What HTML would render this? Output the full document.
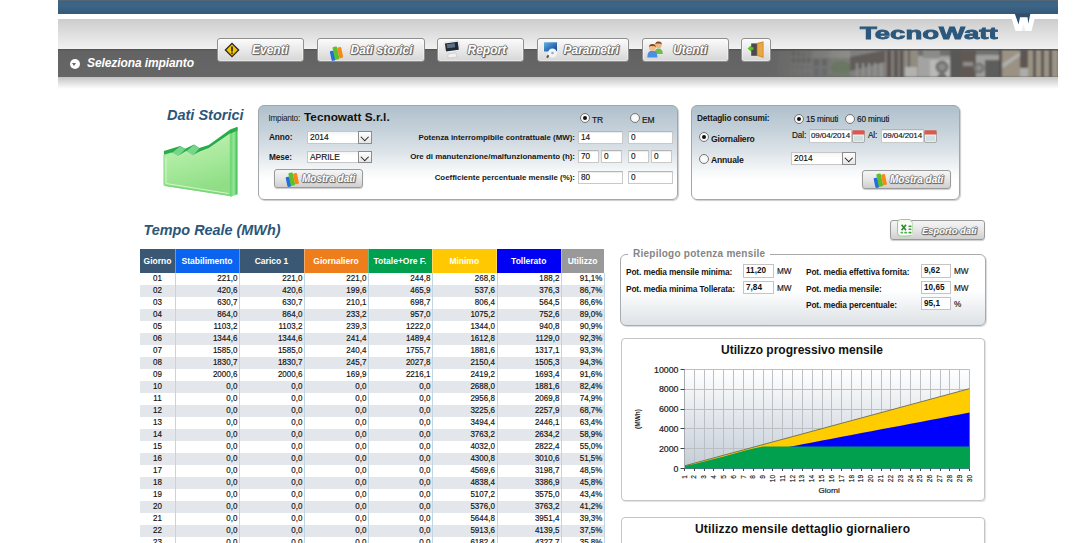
<!DOCTYPE html>
<html><head><meta charset="utf-8">
<style>
*{margin:0;padding:0;box-sizing:border-box}
html,body{width:1092px;height:543px;overflow:hidden;background:#fff;font-family:"Liberation Sans",sans-serif;color:#222}
.a{position:absolute}
/* header */
#hdr{position:absolute;left:58px;top:0;width:1000px;height:90px}
#blue{position:absolute;left:0;top:0;width:1000px;height:13.6px;background:linear-gradient(#6a6a6a 0,#3a6384 1px,#3c6586 40%,#34597a 100%)}
#grayg{position:absolute;left:0;top:19px;width:1000px;height:30px;background:linear-gradient(#cdcdcd,#f1f1f1)}
#dark{position:absolute;left:0;top:49px;width:1000px;height:28px;background:linear-gradient(#505050 0,#636363 2px,#666 100%)}
#shad{position:absolute;left:0;top:77px;width:1000px;height:12px;background:linear-gradient(#c4c4c4,#fff)}
.sel{position:absolute;left:29px;top:56px;color:#fff;font:italic bold 12px "Liberation Sans",sans-serif;letter-spacing:-0.1px;white-space:nowrap}
.circ{position:absolute;left:11.5px;top:59px;width:10px;height:10px;border-radius:50%;background:#fff}
.circ:after{content:"";position:absolute;left:2.5px;top:4px;border-left:2.5px solid transparent;border-right:2.5px solid transparent;border-top:3px solid #666}
.nb{position:absolute;top:38px;height:24px;border:1px solid #8f8f8f;border-radius:3px;background:linear-gradient(#fbfbfb,#e9e9e9 50%,#d6d6d6);box-shadow:0 0 0 1px rgba(255,255,255,.35) inset}
.nb span{position:absolute;top:4px;color:#fff;font:italic bold 12px "Liberation Sans",sans-serif;white-space:nowrap;text-shadow:1px 0 0.5px #6a6a6a,-1px 0 0.5px #7a7a7a,0 1px 0.5px #6a6a6a,0 -1px 0.5px #8a8a8a,1px 1px 1px #444}
.logo{position:absolute;left:801.5px;top:24.5px;color:#2b587c;font:bold 17px "Liberation Sans",sans-serif;line-height:17px;transform-origin:0 0;transform:scaleX(1.62);letter-spacing:0;-webkit-text-stroke:0.8px #2b587c}
/* titles */
.t1{position:absolute;color:#2c5678;font:italic bold 14.5px "Liberation Sans",sans-serif;white-space:nowrap}
/* panels */
.pnl{position:absolute;border:1px solid #a2a6aa;border-radius:6px;background:linear-gradient(#afc0cc 0,#c9d4dc 30%,#dde4e9 50%,#f6f8f9 70%,#fff 80%);box-shadow:1px 1px 1px rgba(0,0,0,.2)}
.lb{position:absolute;font:bold 8.3px "Liberation Sans",sans-serif;color:#161616;white-space:nowrap;letter-spacing:-0.12px;margin-top:0.6px}
.lr{position:absolute;font:8.2px "Liberation Sans",sans-serif;color:#141414;white-space:nowrap;-webkit-text-stroke:0.15px #141414;letter-spacing:-0.1px}
.inp{position:absolute;background:#fff;border:1px solid #c9c9c9;border-top-color:#b5b5b5;box-shadow:inset 0 1px 1px rgba(0,0,0,.08);font:8.2px "Liberation Sans",sans-serif;color:#141414;-webkit-text-stroke:0.15px #141414;padding-left:2px;line-height:11px;white-space:nowrap}
.selbox{position:absolute;background:linear-gradient(#f4f4f4,#fff 40%);border:1px solid #c7c7c7;font:8.4px "Liberation Sans",sans-serif;color:#111;padding-left:2px;white-space:nowrap;-webkit-text-stroke:0.15px #111}
.selbox i{position:absolute;right:-1px;top:-1px;bottom:-1px;width:14px;border:1px solid #8c8c8c;background:linear-gradient(#fff,#e6e6e6)}
.selbox i:after{content:"";position:absolute;left:3px;top:1.5px;width:4.5px;height:4.5px;border-right:1.7px solid #151515;border-bottom:1.7px solid #151515;transform:rotate(45deg)}
.rad{position:absolute;width:10px;height:10px;border-radius:50%;border:1px solid #777;background:radial-gradient(#fff,#eee)}
.rad.on:after{content:"";position:absolute;left:2px;top:2px;width:4px;height:4px;border-radius:50%;background:#111}
.btn{position:absolute;border:1px solid #9a9a9a;border-radius:3px;background:linear-gradient(#f5f5f5,#e6e6e6 50%,#cfcfcf);box-shadow:0 1px 1px rgba(0,0,0,.2)}
.btn span{position:absolute;color:#fff;font:italic bold 10px "Liberation Sans",sans-serif;white-space:nowrap;text-shadow:1px 0 0 #808080,-1px 0 0 #808080,0 1px 0 #707070,0 -1px 0 #909090,1px 1px 1px #444}
/* table */
.th{position:absolute;color:#fff;font:bold 8.5px "Liberation Sans",sans-serif;text-align:center;line-height:24px;white-space:nowrap}
.tr{position:absolute;left:140px;width:464px;height:12px}
.vs{position:absolute;top:273px;height:270px;width:1px;background:#c3d5e3}
.hs{position:absolute;top:249px;height:24px;width:1px;background:rgba(255,255,255,.35)}
.td{position:absolute;height:12px;line-height:12px;font:8px "Liberation Sans",sans-serif;color:#111;white-space:nowrap;-webkit-text-stroke:0.15px #111;transform:translateY(1.3px) scaleY(1.12)}
/* fieldset */
.fs{position:absolute;border:1px solid #a7abae;border-radius:6px;background:linear-gradient(#fff 0,#fff 50%,#dde2e6 100%);box-shadow:1px 1px 1px rgba(0,0,0,.15)}
.vb{position:absolute;background:#fff;border:1px solid #c4c4c4;font:bold 8.2px "Liberation Sans",sans-serif;color:#111;padding-left:2px;line-height:12px}
/* chart */
.cp{position:absolute;border:1px solid #c5c5c5;border-radius:4px;background:#fff;box-shadow:1px 1px 1px rgba(0,0,0,.12)}
.ct{position:absolute;font:bold 12px "Liberation Sans",sans-serif;color:#111;white-space:nowrap}
.yl{position:absolute;left:640px;width:38.5px;text-align:right;font:8.8px "Liberation Sans",sans-serif;color:#1a1a1a;line-height:12px;-webkit-text-stroke:0.2px #1a1a1a}
.xl{position:absolute;top:479px;width:20px;height:12px;text-align:right;font:6.5px "Liberation Sans",sans-serif;color:#222;line-height:12px;transform:rotate(-90deg) scaleY(1.2);transform-origin:50% 50%;-webkit-text-stroke:0.15px #222}
</style></head><body>
<div id="hdr">
  <div id="blue"></div>
  <div id="grayg"></div>
  <div id="dark"></div>
  <div id="shad"></div>
  <!-- photo strip -->
  <svg class="a" style="left:700px;top:49px" width="300" height="28">
    <defs>
      <linearGradient id="fade" x1="0" y1="0" x2="1" y2="0"><stop offset="0" stop-color="#fff" stop-opacity="0"/><stop offset="0.12" stop-color="#fff" stop-opacity="0.35"/><stop offset="0.3" stop-color="#fff" stop-opacity="0.85"/><stop offset="0.42" stop-color="#fff" stop-opacity="1"/></linearGradient>
      <mask id="fm"><rect width="300" height="28" fill="url(#fade)"/></mask>
      <filter id="bl" x="0" y="0" width="1" height="1"><feGaussianBlur stdDeviation="0.85"/><feColorMatrix type="saturate" values="0.65"/><feComponentTransfer><feFuncR type="linear" slope="0.9" intercept="0.03"/><feFuncG type="linear" slope="0.9" intercept="0.03"/><feFuncB type="linear" slope="0.9" intercept="0.03"/></feComponentTransfer></filter>
    </defs>
    <g mask="url(#fm)" filter="url(#bl)">
      <rect x="0" y="0" width="300" height="28" fill="#6c6c6a"/>
      <rect x="20" y="1" width="34" height="27" fill="#7c7c7a"/>
      <rect x="34" y="2.0" width="3" height="15.0" fill="#585856"/>
      <rect x="39" y="3.5" width="3" height="13.5" fill="#585856"/>
      <rect x="44" y="5.0" width="3" height="12.0" fill="#585856"/>
      <rect x="49" y="6.5" width="3" height="10.5" fill="#585856"/>
      <rect x="20" y="14" width="34" height="14" fill="#7e7e7c"/>
      <rect x="24" y="14" width="1" height="14" fill="#6a6a68"/>
      <rect x="29" y="14" width="1" height="14" fill="#6a6a68"/>
      <rect x="34" y="14" width="1" height="14" fill="#6a6a68"/>
      <rect x="39" y="14" width="1" height="14" fill="#6a6a68"/>
      <rect x="44" y="14" width="1" height="14" fill="#6a6a68"/>
      <rect x="49" y="14" width="1" height="14" fill="#6a6a68"/>
      <rect x="32" y="7" width="22" height="1.5" fill="#8a8a88"/><rect x="32" y="14" width="22" height="1.5" fill="#8a8a88"/><rect x="32" y="21" width="22" height="1.5" fill="#8a8a88"/><rect x="54" y="1" width="18" height="27" fill="#7a7a76"/>
      <rect x="54" y="1" width="18" height="8" fill="#8e8d88"/>
      <rect x="56" y="10" width="5" height="7" fill="#5a5e64"/>
      <rect x="64" y="10" width="5" height="7" fill="#5a5e64"/>
      <rect x="56" y="19" width="5" height="8" fill="#646870"/>
      <rect x="64" y="19" width="5" height="8" fill="#646870"/>
      <rect x="72" y="1" width="20" height="27" fill="#7f7f76"/>
      <rect x="72" y="1" width="20" height="8" fill="#94948c"/>
      <ellipse cx="83" cy="19" rx="10" ry="7" fill="#5f7d48"/>
      <rect x="72" y="24" width="20" height="4" fill="#6f7d5c"/>
      <rect x="92" y="1" width="35" height="27" fill="#828280"/>
      <path d="M92,8 L127,1 L127,13 L92,22 Z" fill="#5b534d"/>
      <rect x="98" y="14" width="2" height="14" fill="#969692"/>
      <rect x="104" y="14" width="2" height="14" fill="#969692"/>
      <rect x="110" y="14" width="2" height="14" fill="#969692"/>
      <rect x="116" y="14" width="2" height="14" fill="#969692"/>
      <rect x="122" y="14" width="2" height="14" fill="#969692"/>
      <rect x="127" y="1" width="20" height="27" fill="#7f7a72"/>
      <rect x="129" y="1" width="4" height="27" fill="#54473f"/>
      <rect x="136" y="1" width="4" height="27" fill="#5c4c44"/>
      <rect x="142" y="1" width="3" height="27" fill="#50443e"/>
      <rect x="147" y="1" width="13" height="27" fill="#958a74"/>
      <rect x="150" y="1" width="2" height="20" fill="#555"/>
      <rect x="147" y="18" width="12" height="10" fill="#b5b5b2"/>
      <rect x="160" y="7" width="32" height="21" fill="#a6a6a4"/>
      <rect x="165" y="1" width="17" height="8" fill="#8a8a88"/>
      <rect x="172" y="11" width="20" height="17" fill="#bdbdbb"/>
      <circle cx="184" cy="18" r="6.5" fill="#6a6a68"/><circle cx="184" cy="18" r="3.5" fill="#8c8c8a"/>
      <circle cx="184" cy="29" r="5" fill="#6a6a68"/>
      <rect x="192" y="1" width="11" height="27" fill="#4f4f4e"/>
      <rect x="203" y="1" width="15" height="27" fill="#5e4d45"/>
      <rect x="205" y="13" width="10" height="4" fill="#8c8c8a"/>
      <rect x="218" y="6" width="23" height="22" fill="#a2a2a0"/>
      <rect x="227" y="11" width="14" height="17" fill="#545453"/>
      <circle cx="221" cy="19" r="5.5" fill="#707070"/><circle cx="221" cy="19" r="2.8" fill="#909090"/>
      <rect x="241" y="1" width="3" height="27" fill="#4d4742"/>
      <rect x="244" y="1" width="18" height="27" fill="#9f9276"/>
      <path d="M244,15 L262,3 L262,7 L245,19 Z" fill="#b4b4b2"/>
      <rect x="262" y="1" width="8" height="27" fill="#594a42"/>
      <rect x="262" y="19" width="8" height="9" fill="#b0b0ae"/>
      <rect x="270" y="1" width="30" height="27" fill="#a09478"/>
      <rect x="275" y="1" width="3" height="27" fill="#544842"/>
      <rect x="283" y="1" width="3" height="27" fill="#544842"/>
      <rect x="291" y="1" width="3" height="27" fill="#544842"/>
    </g>
    <rect x="0" y="0" width="300" height="1.5" fill="#4a4a4a" opacity="0.6"/>
  </svg>
  <div class="circ"></div>
  <div class="sel">Seleziona impianto</div>
  <div class="logo">TecnoWatt</div>
  <!-- W mark -->
  <svg class="a" style="left:950px;top:12px" width="30" height="22">
    <path d="M3.8,6.8 L7.5,19 L23.5,19 L26.6,6.8 Z" fill="#fff"/>
    <path d="M6.7,1.6 L10.6,12.5 L12,5.3 L19.5,5.3 L20.3,11.8 L22.4,1.6 Z" fill="#2d4f6c"/><path d="M13.5,19 L15.5,12.5 L17.5,19 Z" fill="#e2e2e2" opacity="0.6"/>
  </svg>
  <!-- nav buttons -->
  <div class="nb" style="left:159px;width:87px">
    <svg class="a" style="left:6px;top:3px" width="16" height="16"><path d="M8,0.5 L15.5,8 L8,15.5 L0.5,8 Z" fill="#222"/><path d="M8,2.3 L13.7,8 L8,13.7 L2.3,8 Z" fill="#f5c400"/><rect x="7.2" y="4.5" width="1.6" height="5" fill="#222"/><rect x="7.2" y="10.5" width="1.6" height="1.6" fill="#222"/></svg>
    <span style="left:34px">Eventi</span>
  </div>
  <div class="nb" style="left:259px;width:108px">
    <svg class="a" style="left:8px;top:3px" width="20" height="20"><g transform="rotate(-12 10 10)"><rect x="4" y="8" width="4" height="10" rx="1" fill="#1f6fe0"/><rect x="7.5" y="4.5" width="4.5" height="13" rx="1" fill="#5cc02a"/><rect x="12" y="6" width="4" height="11" rx="1" fill="#f58a1a"/></g></svg>
    <span style="left:32.5px">Dati storici</span>
  </div>
  <div class="nb" style="left:379px;width:87px">
    <svg class="a" style="left:0px;top:0px" width="30" height="22"><g transform="rotate(-8 14 7)"><rect x="6" y="2.5" width="15.5" height="10.5" rx="1.5" fill="#fafafa" stroke="#d8d8d8" stroke-width="0.6"/><rect x="7.3" y="3.6" width="13" height="8" fill="#1f2a36"/><rect x="9" y="4.6" width="8" height="4" fill="#6d8299" opacity="0.8"/></g><path d="M10,15 L18,14 L19,18 L10,19 Z" fill="#f2f2f2" stroke="#bbb" stroke-width="0.5"/></svg>
    <span style="left:29.5px">Report</span>
  </div>
  <div class="nb" style="left:479px;width:92px">
    <svg class="a" style="left:0px;top:0px" width="24" height="22"><rect x="5.2" y="3" width="14" height="10" fill="#f5efe8"/><defs><linearGradient id="pgr" x1="0" y1="0" x2="1" y2="1"><stop offset="0" stop-color="#5fb4e8"/><stop offset="1" stop-color="#0a3c8c"/></linearGradient></defs><rect x="6" y="3.3" width="13" height="9.2" fill="url(#pgr)"/><circle cx="14.5" cy="14" r="4.5" fill="#f4f4f4"/><circle cx="14.5" cy="14" r="1.3" fill="#8fb0d8"/><rect x="9" y="16" width="2" height="3" fill="#555" transform="rotate(30 10 17)"/></svg>
    <span style="left:25.5px">Parametri</span>
  </div>
  <div class="nb" style="left:584px;width:87px">
    <svg class="a" style="left:0px;top:0px" width="24" height="22"><path d="M11.5,15 Q11.5,9.5 15.5,9.5 Q19.8,9.5 19.8,15 Z" fill="#6cc04a"/><circle cx="15.5" cy="6" r="3.2" fill="#e8b88a"/><path d="M12.2,5.5 Q12.5,2.2 15.5,2.4 Q18.8,2.3 18.8,5.6 Q17,4 15.5,4.6 Q13.5,4 12.2,5.5 Z" fill="#8a4a1a"/><path d="M4.2,18.5 Q4.2,11.5 9.4,11.5 Q14.5,11.5 14.5,18.5 Z" fill="#4a8fe0"/><circle cx="9.4" cy="8.7" r="3.4" fill="#f0c090"/><path d="M6,8.2 Q6.2,4.8 9.4,5 Q12.8,4.8 12.8,8.4 Q11,6.6 9.4,7.3 Q7.4,6.6 6,8.2 Z" fill="#8a4a1a"/></svg>
    <span style="left:30px">Utenti</span>
  </div>
  <div class="nb" style="left:683px;width:30px">
    <svg class="a" style="left:0px;top:0px" width="28" height="22"><rect x="9.2" y="4.4" width="6" height="12.4" fill="#4a4a4c"/><path d="M14.8,4 L21.6,2.3 L21.6,19 L14.8,16.8 Z" fill="#d9902e"/><path d="M16,5 L20.5,3.8 L20.5,17.2 L16,16 Z" fill="#e8a848"/><path d="M5.5,9.5 L9,6.6 L9,8.3 L11.5,8.3 L11.5,10.7 L9,10.7 L9,12.4 Z" fill="#62c02a"/></svg>
  </div>
</div>

<!-- Dati storici title + icon -->
<div class="t1" style="left:167px;top:107px">Dati Storici</div>
<svg class="a" style="left:160px;top:124px" width="82" height="78">
  <defs>
    <linearGradient id="gf" x1="0" y1="0" x2="0.3" y2="1"><stop offset="0" stop-color="#c6f3b8"/><stop offset="0.55" stop-color="#a8e99c"/><stop offset="1" stop-color="#8fde86"/></linearGradient>
    <linearGradient id="gs" x1="0" y1="0" x2="1" y2="0"><stop offset="0" stop-color="#5fd36a"/><stop offset="0.5" stop-color="#9be69a"/><stop offset="1" stop-color="#35b84e"/></linearGradient>
  </defs>
  <path d="M3.9,31.1 L12,28.9 L17.9,32.6 L26,27.5 L32.6,31.9 L39.2,28.2 L48.8,24.5 L70.2,9.8 L70.2,71.6 L3.9,61.3 Z" fill="url(#gf)" stroke="#7fd97a" stroke-width="0.8"/>
  <path d="M6,34 L6,59.5 L68.5,69.5" fill="none" stroke="#d8f7d0" stroke-width="0.9"/>
  <path d="M5.5,60.8 L70,70.8 L70,72 L5,62 Z" fill="#7ad67a"/>
  <path d="M70.2,6.1 L77.5,3.2 L77.5,70.2 L70.2,73.1 Z" fill="url(#gs)"/>
  <path d="M3.9,27 L20.1,22 L25.2,24.8 L34.1,20.4 L39.2,24 L48.8,21 L70.2,5.6 L77.5,2.8 L77.5,6.5 L70.2,9.8 L48.8,24.5 L39.2,28.2 L32.6,31.9 L26,27.5 L17.9,32.6 L12,28.9 L3.9,31.6 Z" fill="#27ad48"/>
  <path d="M12,28.9 L20.1,22.3 L25.2,25.2 L17.9,32.6 Z" fill="#78d68a"/>
  <path d="M26,27.5 L34.1,20.8 L39.2,24.5 L32.6,31.9 Z" fill="#78d68a"/>
  <path d="M3.9,31.1 L12,28.9 L17.9,32.6 L26,27.5 L32.6,31.9 L39.2,28.2 L48.8,24.5 L70.2,9.8" fill="none" stroke="#e6fbd9" stroke-width="0.7"/>
</svg>

<!-- panel 1 -->
<div class="pnl" style="left:258px;top:105px;width:420px;height:95px"></div>
<div class="lb" style="left:268.5px;top:113.5px;font-weight:normal;font-size:8.2px;letter-spacing:-0.25px">Impianto:</div>
<div class="a" style="left:304px;top:110px;font:bold 11.8px 'Liberation Sans',sans-serif;color:#111;white-space:nowrap">Tecnowatt S.r.l.</div>
<div class="lb" style="left:269px;top:131.8px">Anno:</div>
<div class="lb" style="left:269px;top:151.8px">Mese:</div>
<div class="selbox" style="left:307px;top:131px;width:65px;height:13px;line-height:11px">2014<i></i></div>
<div class="selbox" style="left:307px;top:151px;width:65px;height:12px;line-height:10px">APRILE<i></i></div>
<div class="btn" style="left:274px;top:169px;width:89px;height:19px">
  <svg class="a" style="left:7px;top:0px" width="20" height="18"><g transform="rotate(-12 10 9)"><rect x="4" y="6" width="4" height="10" rx="1" fill="#1f6fe0"/><rect x="7.5" y="2.5" width="4.5" height="13" rx="1" fill="#5cc02a"/><rect x="12" y="4" width="4" height="11" rx="1" fill="#f58a1a"/></g></svg>
  <span style="left:27px;top:3px">Mostra dati</span>
</div>
<div class="rad on" style="left:580px;top:113px"></div>
<div class="lr" style="left:592px;top:115px;font-size:8.5px">TR</div>
<div class="rad" style="left:630px;top:113px"></div>
<div class="lr" style="left:642px;top:115px;font-size:8.5px">EM</div>
<div class="lb" style="right:517px;font-size:7.9px;letter-spacing:0;top:132px">Potenza interrompibile contrattuale (MW):</div>
<div class="lb" style="right:517px;font-size:7.9px;letter-spacing:0;top:151px">Ore di manutenzione/malfunzionamento (h):</div>
<div class="lb" style="right:517px;font-size:7.9px;letter-spacing:0;top:172px">Coefficiente percentuale mensile (%):</div>
<div class="inp" style="left:578px;top:131px;width:45px;height:13px">14</div>
<div class="inp" style="left:628px;top:131px;width:45px;height:13px">0</div>
<div class="inp" style="left:578px;top:150px;width:21px;height:13px">70</div>
<div class="inp" style="left:601px;top:150px;width:21px;height:13px">0</div>
<div class="inp" style="left:628px;top:150px;width:21px;height:13px">0</div>
<div class="inp" style="left:651px;top:150px;width:21px;height:13px">0</div>
<div class="inp" style="left:578px;top:171px;width:45px;height:13px">80</div>
<div class="inp" style="left:628px;top:171px;width:45px;height:13px">0</div>

<!-- panel 2 -->
<div class="pnl" style="left:691px;top:105px;width:269px;height:95px"></div>
<div class="lb" style="left:697px;top:112px">Dettaglio consumi:</div>
<div class="rad on" style="left:794px;top:114px"></div>
<div class="lr" style="left:806px;top:115px">15 minuti</div>
<div class="rad" style="left:845px;top:114px"></div>
<div class="lr" style="left:857px;top:115px">60 minuti</div>
<div class="rad on" style="left:699px;top:132.2px"></div>
<div class="lb" style="left:711px;top:133.1px;font-size:8.6px;letter-spacing:-0.2px">Giornaliero</div>
<div class="rad" style="left:699px;top:154px"></div>
<div class="lb" style="left:711px;top:154px;font-size:8.6px;letter-spacing:-0.2px">Annuale</div>
<div class="lr" style="left:792px;top:131px">Dal:</div>
<div class="inp" style="left:809px;top:129px;width:43px;height:14px;line-height:12px;padding-left:1px;font-size:8px;letter-spacing:-0.1px">09/04/2014</div>
<svg class="a" style="left:852px;top:130px" width="13" height="13"><rect x="0.5" y="0.5" width="12" height="12" rx="1.5" fill="#e8eef0" stroke="#aaa"/><rect x="0.5" y="0.5" width="12" height="4" fill="#e2554a"/><rect x="2" y="6" width="9" height="5" fill="#cfe0e2"/></svg>
<div class="lr" style="left:868px;top:131px">Al:</div>
<div class="inp" style="left:881px;top:129px;width:43px;height:14px;line-height:12px;padding-left:1px;font-size:8px;letter-spacing:-0.1px">09/04/2014</div>
<svg class="a" style="left:924px;top:130px" width="13" height="13"><rect x="0.5" y="0.5" width="12" height="12" rx="1.5" fill="#e8eef0" stroke="#aaa"/><rect x="0.5" y="0.5" width="12" height="4" fill="#e2554a"/><rect x="2" y="6" width="9" height="5" fill="#cfe0e2"/></svg>
<div class="selbox" style="left:791px;top:152px;width:65px;height:13px;line-height:11px">2014<i></i></div>
<div class="btn" style="left:862px;top:170px;width:89px;height:19px">
  <svg class="a" style="left:7px;top:0px" width="20" height="18"><g transform="rotate(-12 10 9)"><rect x="4" y="6" width="4" height="10" rx="1" fill="#1f6fe0"/><rect x="7.5" y="2.5" width="4.5" height="13" rx="1" fill="#5cc02a"/><rect x="12" y="4" width="4" height="11" rx="1" fill="#f58a1a"/></g></svg>
  <span style="left:27px;top:3px">Mostra dati</span>
</div>

<!-- Tempo reale -->
<div class="t1" style="left:143.5px;top:222px;font-size:14.4px">Tempo Reale (MWh)</div>
<div class="th" style="left:140px;top:249px;width:35px;height:24px;background:#3a5874">Giorno</div>
<div class="th" style="left:175px;top:249px;width:64px;height:24px;background:#0a64f0">Stabilimento</div>
<div class="th" style="left:239px;top:249px;width:65px;height:24px;background:#3a5874">Carico 1</div>
<div class="th" style="left:304px;top:249px;width:64px;height:24px;background:#ee7d1c">Giornaliero</div>
<div class="th" style="left:368px;top:249px;width:64px;height:24px;background:#00a04e">Totale+Ore F.</div>
<div class="th" style="left:432px;top:249px;width:64.5px;height:24px;background:#ffc800">Minimo</div>
<div class="th" style="left:496.5px;top:249px;width:64.5px;height:24px;background:#0000f5">Tollerato</div>
<div class="th" style="left:561px;top:249px;width:43px;height:24px;background:#999999">Utilizzo</div>
<div class="tr" style="top:273px;background:#fff"></div>
<div class="tr" style="top:285px;background:#e3e7eb"></div>
<div class="tr" style="top:297px;background:#fff"></div>
<div class="tr" style="top:309px;background:#e3e7eb"></div>
<div class="tr" style="top:321px;background:#fff"></div>
<div class="tr" style="top:333px;background:#e3e7eb"></div>
<div class="tr" style="top:345px;background:#fff"></div>
<div class="tr" style="top:357px;background:#e3e7eb"></div>
<div class="tr" style="top:369px;background:#fff"></div>
<div class="tr" style="top:381px;background:#e3e7eb"></div>
<div class="tr" style="top:393px;background:#fff"></div>
<div class="tr" style="top:405px;background:#e3e7eb"></div>
<div class="tr" style="top:417px;background:#fff"></div>
<div class="tr" style="top:429px;background:#e3e7eb"></div>
<div class="tr" style="top:441px;background:#fff"></div>
<div class="tr" style="top:453px;background:#e3e7eb"></div>
<div class="tr" style="top:465px;background:#fff"></div>
<div class="tr" style="top:477px;background:#e3e7eb"></div>
<div class="tr" style="top:489px;background:#fff"></div>
<div class="tr" style="top:501px;background:#e3e7eb"></div>
<div class="tr" style="top:513px;background:#fff"></div>
<div class="tr" style="top:525px;background:#e3e7eb"></div>
<div class="tr" style="top:537px;background:#fff"></div>
<div class="vs" style="left:175px"></div>
<div class="vs" style="left:239px"></div>
<div class="vs" style="left:304px"></div>
<div class="vs" style="left:368px"></div>
<div class="vs" style="left:432px"></div>
<div class="vs" style="left:496.5px"></div>
<div class="vs" style="left:561px"></div>
<div class="vs" style="left:604px"></div>
<div class="hs" style="left:174.5px"></div>
<div class="hs" style="left:238.5px"></div>
<div class="hs" style="left:303.5px"></div>
<div class="hs" style="left:367.5px"></div>
<div class="hs" style="left:431.5px"></div>
<div class="hs" style="left:496.0px"></div>
<div class="hs" style="left:560.5px"></div>
<div class="td" style="left:140px;top:273px;width:35px;text-align:center">01</div>
<div class="td" style="left:175px;top:273px;width:62.4px;text-align:right">221,0</div>
<div class="td" style="left:239px;top:273px;width:63.4px;text-align:right">221,0</div>
<div class="td" style="left:304px;top:273px;width:62.4px;text-align:right">221,0</div>
<div class="td" style="left:368px;top:273px;width:62.4px;text-align:right">244,8</div>
<div class="td" style="left:432px;top:273px;width:62.9px;text-align:right">268,8</div>
<div class="td" style="left:496.5px;top:273px;width:62.9px;text-align:right">188,2</div>
<div class="td" style="left:561px;top:273px;width:41.4px;text-align:right">91,1%</div>
<div class="td" style="left:140px;top:285px;width:35px;text-align:center">02</div>
<div class="td" style="left:175px;top:285px;width:62.4px;text-align:right">420,6</div>
<div class="td" style="left:239px;top:285px;width:63.4px;text-align:right">420,6</div>
<div class="td" style="left:304px;top:285px;width:62.4px;text-align:right">199,6</div>
<div class="td" style="left:368px;top:285px;width:62.4px;text-align:right">465,9</div>
<div class="td" style="left:432px;top:285px;width:62.9px;text-align:right">537,6</div>
<div class="td" style="left:496.5px;top:285px;width:62.9px;text-align:right">376,3</div>
<div class="td" style="left:561px;top:285px;width:41.4px;text-align:right">86,7%</div>
<div class="td" style="left:140px;top:297px;width:35px;text-align:center">03</div>
<div class="td" style="left:175px;top:297px;width:62.4px;text-align:right">630,7</div>
<div class="td" style="left:239px;top:297px;width:63.4px;text-align:right">630,7</div>
<div class="td" style="left:304px;top:297px;width:62.4px;text-align:right">210,1</div>
<div class="td" style="left:368px;top:297px;width:62.4px;text-align:right">698,7</div>
<div class="td" style="left:432px;top:297px;width:62.9px;text-align:right">806,4</div>
<div class="td" style="left:496.5px;top:297px;width:62.9px;text-align:right">564,5</div>
<div class="td" style="left:561px;top:297px;width:41.4px;text-align:right">86,6%</div>
<div class="td" style="left:140px;top:309px;width:35px;text-align:center">04</div>
<div class="td" style="left:175px;top:309px;width:62.4px;text-align:right">864,0</div>
<div class="td" style="left:239px;top:309px;width:63.4px;text-align:right">864,0</div>
<div class="td" style="left:304px;top:309px;width:62.4px;text-align:right">233,2</div>
<div class="td" style="left:368px;top:309px;width:62.4px;text-align:right">957,0</div>
<div class="td" style="left:432px;top:309px;width:62.9px;text-align:right">1075,2</div>
<div class="td" style="left:496.5px;top:309px;width:62.9px;text-align:right">752,6</div>
<div class="td" style="left:561px;top:309px;width:41.4px;text-align:right">89,0%</div>
<div class="td" style="left:140px;top:321px;width:35px;text-align:center">05</div>
<div class="td" style="left:175px;top:321px;width:62.4px;text-align:right">1103,2</div>
<div class="td" style="left:239px;top:321px;width:63.4px;text-align:right">1103,2</div>
<div class="td" style="left:304px;top:321px;width:62.4px;text-align:right">239,3</div>
<div class="td" style="left:368px;top:321px;width:62.4px;text-align:right">1222,0</div>
<div class="td" style="left:432px;top:321px;width:62.9px;text-align:right">1344,0</div>
<div class="td" style="left:496.5px;top:321px;width:62.9px;text-align:right">940,8</div>
<div class="td" style="left:561px;top:321px;width:41.4px;text-align:right">90,9%</div>
<div class="td" style="left:140px;top:333px;width:35px;text-align:center">06</div>
<div class="td" style="left:175px;top:333px;width:62.4px;text-align:right">1344,6</div>
<div class="td" style="left:239px;top:333px;width:63.4px;text-align:right">1344,6</div>
<div class="td" style="left:304px;top:333px;width:62.4px;text-align:right">241,4</div>
<div class="td" style="left:368px;top:333px;width:62.4px;text-align:right">1489,4</div>
<div class="td" style="left:432px;top:333px;width:62.9px;text-align:right">1612,8</div>
<div class="td" style="left:496.5px;top:333px;width:62.9px;text-align:right">1129,0</div>
<div class="td" style="left:561px;top:333px;width:41.4px;text-align:right">92,3%</div>
<div class="td" style="left:140px;top:345px;width:35px;text-align:center">07</div>
<div class="td" style="left:175px;top:345px;width:62.4px;text-align:right">1585,0</div>
<div class="td" style="left:239px;top:345px;width:63.4px;text-align:right">1585,0</div>
<div class="td" style="left:304px;top:345px;width:62.4px;text-align:right">240,4</div>
<div class="td" style="left:368px;top:345px;width:62.4px;text-align:right">1755,7</div>
<div class="td" style="left:432px;top:345px;width:62.9px;text-align:right">1881,6</div>
<div class="td" style="left:496.5px;top:345px;width:62.9px;text-align:right">1317,1</div>
<div class="td" style="left:561px;top:345px;width:41.4px;text-align:right">93,3%</div>
<div class="td" style="left:140px;top:357px;width:35px;text-align:center">08</div>
<div class="td" style="left:175px;top:357px;width:62.4px;text-align:right">1830,7</div>
<div class="td" style="left:239px;top:357px;width:63.4px;text-align:right">1830,7</div>
<div class="td" style="left:304px;top:357px;width:62.4px;text-align:right">245,7</div>
<div class="td" style="left:368px;top:357px;width:62.4px;text-align:right">2027,8</div>
<div class="td" style="left:432px;top:357px;width:62.9px;text-align:right">2150,4</div>
<div class="td" style="left:496.5px;top:357px;width:62.9px;text-align:right">1505,3</div>
<div class="td" style="left:561px;top:357px;width:41.4px;text-align:right">94,3%</div>
<div class="td" style="left:140px;top:369px;width:35px;text-align:center">09</div>
<div class="td" style="left:175px;top:369px;width:62.4px;text-align:right">2000,6</div>
<div class="td" style="left:239px;top:369px;width:63.4px;text-align:right">2000,6</div>
<div class="td" style="left:304px;top:369px;width:62.4px;text-align:right">169,9</div>
<div class="td" style="left:368px;top:369px;width:62.4px;text-align:right">2216,1</div>
<div class="td" style="left:432px;top:369px;width:62.9px;text-align:right">2419,2</div>
<div class="td" style="left:496.5px;top:369px;width:62.9px;text-align:right">1693,4</div>
<div class="td" style="left:561px;top:369px;width:41.4px;text-align:right">91,6%</div>
<div class="td" style="left:140px;top:381px;width:35px;text-align:center">10</div>
<div class="td" style="left:175px;top:381px;width:62.4px;text-align:right">0,0</div>
<div class="td" style="left:239px;top:381px;width:63.4px;text-align:right">0,0</div>
<div class="td" style="left:304px;top:381px;width:62.4px;text-align:right">0,0</div>
<div class="td" style="left:368px;top:381px;width:62.4px;text-align:right">0,0</div>
<div class="td" style="left:432px;top:381px;width:62.9px;text-align:right">2688,0</div>
<div class="td" style="left:496.5px;top:381px;width:62.9px;text-align:right">1881,6</div>
<div class="td" style="left:561px;top:381px;width:41.4px;text-align:right">82,4%</div>
<div class="td" style="left:140px;top:393px;width:35px;text-align:center">11</div>
<div class="td" style="left:175px;top:393px;width:62.4px;text-align:right">0,0</div>
<div class="td" style="left:239px;top:393px;width:63.4px;text-align:right">0,0</div>
<div class="td" style="left:304px;top:393px;width:62.4px;text-align:right">0,0</div>
<div class="td" style="left:368px;top:393px;width:62.4px;text-align:right">0,0</div>
<div class="td" style="left:432px;top:393px;width:62.9px;text-align:right">2956,8</div>
<div class="td" style="left:496.5px;top:393px;width:62.9px;text-align:right">2069,8</div>
<div class="td" style="left:561px;top:393px;width:41.4px;text-align:right">74,9%</div>
<div class="td" style="left:140px;top:405px;width:35px;text-align:center">12</div>
<div class="td" style="left:175px;top:405px;width:62.4px;text-align:right">0,0</div>
<div class="td" style="left:239px;top:405px;width:63.4px;text-align:right">0,0</div>
<div class="td" style="left:304px;top:405px;width:62.4px;text-align:right">0,0</div>
<div class="td" style="left:368px;top:405px;width:62.4px;text-align:right">0,0</div>
<div class="td" style="left:432px;top:405px;width:62.9px;text-align:right">3225,6</div>
<div class="td" style="left:496.5px;top:405px;width:62.9px;text-align:right">2257,9</div>
<div class="td" style="left:561px;top:405px;width:41.4px;text-align:right">68,7%</div>
<div class="td" style="left:140px;top:417px;width:35px;text-align:center">13</div>
<div class="td" style="left:175px;top:417px;width:62.4px;text-align:right">0,0</div>
<div class="td" style="left:239px;top:417px;width:63.4px;text-align:right">0,0</div>
<div class="td" style="left:304px;top:417px;width:62.4px;text-align:right">0,0</div>
<div class="td" style="left:368px;top:417px;width:62.4px;text-align:right">0,0</div>
<div class="td" style="left:432px;top:417px;width:62.9px;text-align:right">3494,4</div>
<div class="td" style="left:496.5px;top:417px;width:62.9px;text-align:right">2446,1</div>
<div class="td" style="left:561px;top:417px;width:41.4px;text-align:right">63,4%</div>
<div class="td" style="left:140px;top:429px;width:35px;text-align:center">14</div>
<div class="td" style="left:175px;top:429px;width:62.4px;text-align:right">0,0</div>
<div class="td" style="left:239px;top:429px;width:63.4px;text-align:right">0,0</div>
<div class="td" style="left:304px;top:429px;width:62.4px;text-align:right">0,0</div>
<div class="td" style="left:368px;top:429px;width:62.4px;text-align:right">0,0</div>
<div class="td" style="left:432px;top:429px;width:62.9px;text-align:right">3763,2</div>
<div class="td" style="left:496.5px;top:429px;width:62.9px;text-align:right">2634,2</div>
<div class="td" style="left:561px;top:429px;width:41.4px;text-align:right">58,9%</div>
<div class="td" style="left:140px;top:441px;width:35px;text-align:center">15</div>
<div class="td" style="left:175px;top:441px;width:62.4px;text-align:right">0,0</div>
<div class="td" style="left:239px;top:441px;width:63.4px;text-align:right">0,0</div>
<div class="td" style="left:304px;top:441px;width:62.4px;text-align:right">0,0</div>
<div class="td" style="left:368px;top:441px;width:62.4px;text-align:right">0,0</div>
<div class="td" style="left:432px;top:441px;width:62.9px;text-align:right">4032,0</div>
<div class="td" style="left:496.5px;top:441px;width:62.9px;text-align:right">2822,4</div>
<div class="td" style="left:561px;top:441px;width:41.4px;text-align:right">55,0%</div>
<div class="td" style="left:140px;top:453px;width:35px;text-align:center">16</div>
<div class="td" style="left:175px;top:453px;width:62.4px;text-align:right">0,0</div>
<div class="td" style="left:239px;top:453px;width:63.4px;text-align:right">0,0</div>
<div class="td" style="left:304px;top:453px;width:62.4px;text-align:right">0,0</div>
<div class="td" style="left:368px;top:453px;width:62.4px;text-align:right">0,0</div>
<div class="td" style="left:432px;top:453px;width:62.9px;text-align:right">4300,8</div>
<div class="td" style="left:496.5px;top:453px;width:62.9px;text-align:right">3010,6</div>
<div class="td" style="left:561px;top:453px;width:41.4px;text-align:right">51,5%</div>
<div class="td" style="left:140px;top:465px;width:35px;text-align:center">17</div>
<div class="td" style="left:175px;top:465px;width:62.4px;text-align:right">0,0</div>
<div class="td" style="left:239px;top:465px;width:63.4px;text-align:right">0,0</div>
<div class="td" style="left:304px;top:465px;width:62.4px;text-align:right">0,0</div>
<div class="td" style="left:368px;top:465px;width:62.4px;text-align:right">0,0</div>
<div class="td" style="left:432px;top:465px;width:62.9px;text-align:right">4569,6</div>
<div class="td" style="left:496.5px;top:465px;width:62.9px;text-align:right">3198,7</div>
<div class="td" style="left:561px;top:465px;width:41.4px;text-align:right">48,5%</div>
<div class="td" style="left:140px;top:477px;width:35px;text-align:center">18</div>
<div class="td" style="left:175px;top:477px;width:62.4px;text-align:right">0,0</div>
<div class="td" style="left:239px;top:477px;width:63.4px;text-align:right">0,0</div>
<div class="td" style="left:304px;top:477px;width:62.4px;text-align:right">0,0</div>
<div class="td" style="left:368px;top:477px;width:62.4px;text-align:right">0,0</div>
<div class="td" style="left:432px;top:477px;width:62.9px;text-align:right">4838,4</div>
<div class="td" style="left:496.5px;top:477px;width:62.9px;text-align:right">3386,9</div>
<div class="td" style="left:561px;top:477px;width:41.4px;text-align:right">45,8%</div>
<div class="td" style="left:140px;top:489px;width:35px;text-align:center">19</div>
<div class="td" style="left:175px;top:489px;width:62.4px;text-align:right">0,0</div>
<div class="td" style="left:239px;top:489px;width:63.4px;text-align:right">0,0</div>
<div class="td" style="left:304px;top:489px;width:62.4px;text-align:right">0,0</div>
<div class="td" style="left:368px;top:489px;width:62.4px;text-align:right">0,0</div>
<div class="td" style="left:432px;top:489px;width:62.9px;text-align:right">5107,2</div>
<div class="td" style="left:496.5px;top:489px;width:62.9px;text-align:right">3575,0</div>
<div class="td" style="left:561px;top:489px;width:41.4px;text-align:right">43,4%</div>
<div class="td" style="left:140px;top:501px;width:35px;text-align:center">20</div>
<div class="td" style="left:175px;top:501px;width:62.4px;text-align:right">0,0</div>
<div class="td" style="left:239px;top:501px;width:63.4px;text-align:right">0,0</div>
<div class="td" style="left:304px;top:501px;width:62.4px;text-align:right">0,0</div>
<div class="td" style="left:368px;top:501px;width:62.4px;text-align:right">0,0</div>
<div class="td" style="left:432px;top:501px;width:62.9px;text-align:right">5376,0</div>
<div class="td" style="left:496.5px;top:501px;width:62.9px;text-align:right">3763,2</div>
<div class="td" style="left:561px;top:501px;width:41.4px;text-align:right">41,2%</div>
<div class="td" style="left:140px;top:513px;width:35px;text-align:center">21</div>
<div class="td" style="left:175px;top:513px;width:62.4px;text-align:right">0,0</div>
<div class="td" style="left:239px;top:513px;width:63.4px;text-align:right">0,0</div>
<div class="td" style="left:304px;top:513px;width:62.4px;text-align:right">0,0</div>
<div class="td" style="left:368px;top:513px;width:62.4px;text-align:right">0,0</div>
<div class="td" style="left:432px;top:513px;width:62.9px;text-align:right">5644,8</div>
<div class="td" style="left:496.5px;top:513px;width:62.9px;text-align:right">3951,4</div>
<div class="td" style="left:561px;top:513px;width:41.4px;text-align:right">39,3%</div>
<div class="td" style="left:140px;top:525px;width:35px;text-align:center">22</div>
<div class="td" style="left:175px;top:525px;width:62.4px;text-align:right">0,0</div>
<div class="td" style="left:239px;top:525px;width:63.4px;text-align:right">0,0</div>
<div class="td" style="left:304px;top:525px;width:62.4px;text-align:right">0,0</div>
<div class="td" style="left:368px;top:525px;width:62.4px;text-align:right">0,0</div>
<div class="td" style="left:432px;top:525px;width:62.9px;text-align:right">5913,6</div>
<div class="td" style="left:496.5px;top:525px;width:62.9px;text-align:right">4139,5</div>
<div class="td" style="left:561px;top:525px;width:41.4px;text-align:right">37,5%</div>
<div class="td" style="left:140px;top:537px;width:35px;text-align:center">23</div>
<div class="td" style="left:175px;top:537px;width:62.4px;text-align:right">0,0</div>
<div class="td" style="left:239px;top:537px;width:63.4px;text-align:right">0,0</div>
<div class="td" style="left:304px;top:537px;width:62.4px;text-align:right">0,0</div>
<div class="td" style="left:368px;top:537px;width:62.4px;text-align:right">0,0</div>
<div class="td" style="left:432px;top:537px;width:62.9px;text-align:right">6182,4</div>
<div class="td" style="left:496.5px;top:537px;width:62.9px;text-align:right">4327,7</div>
<div class="td" style="left:561px;top:537px;width:41.4px;text-align:right">35,8%</div>

<!-- Esporta -->
<div class="btn" style="left:890px;top:220px;width:95px;height:20px">
  <svg class="a" style="left:5px;top:-3px" width="20" height="21"><rect x="1.5" y="1.5" width="14.5" height="16.5" rx="3" fill="#f6faf3" stroke="#8fd37e" stroke-width="1"/><rect x="4" y="4.5" width="12" height="12.5" fill="#fbfdfa" transform="rotate(-3 10 10)"/><path d="M5.6,6.8 L10,12.2 M10,6.8 L5.6,12.2" stroke="#2d8a2d" stroke-width="1.7"/><rect x="12.5" y="7.4" width="3" height="1.6" rx=".6" fill="#3f9f3f"/><rect x="12.5" y="10.5" width="3" height="1.6" rx=".6" fill="#3f9f3f"/><rect x="12.5" y="13.8" width="3" height="1.6" rx=".6" fill="#3f9f3f"/><rect x="4.5" y="13.8" width="2.5" height="1.6" rx=".6" fill="#55b055"/><rect x="8.2" y="13.8" width="3" height="1.6" rx=".6" fill="#55b055"/></svg>
  <span style="left:31px;top:4px;font-size:9.4px">Esporto dati</span>
</div>

<!-- Riepilogo -->
<div class="fs" style="left:620px;top:254px;width:366px;height:72px"></div>
<div class="a" style="left:628px;top:248px;height:12px;line-height:10px;padding:0 5px;background:#fff;font:bold 10px 'Liberation Sans',sans-serif;color:#858585;letter-spacing:0.25px;white-space:nowrap">Riepilogo potenza mensile</div>
<div class="lb" style="left:626px;top:266px">Pot. media mensile minima:</div>
<div class="lb" style="left:626px;top:283px">Pot. media minima Tollerata:</div>
<div class="vb" style="left:743px;top:264px;width:31px;height:14px">11,20</div>
<div class="vb" style="left:743px;top:281px;width:31px;height:13px">7,84</div>
<div class="lr" style="left:777px;top:267px">MW</div>
<div class="lr" style="left:777px;top:284px">MW</div>
<div class="lb" style="left:806px;top:266px">Pot. media effettiva fornita:</div>
<div class="lb" style="left:806px;top:283px">Pot. media mensile:</div>
<div class="lb" style="left:806px;top:299px">Pot. media percentuale:</div>
<div class="vb" style="left:921px;top:264px;width:30px;height:14px">9,62</div>
<div class="vb" style="left:921px;top:281px;width:30px;height:13px">10,65</div>
<div class="vb" style="left:921px;top:297px;width:30px;height:13px">95,1</div>
<div class="lr" style="left:954px;top:267px">MW</div>
<div class="lr" style="left:954px;top:284px">MW</div>
<div class="lr" style="left:954px;top:300px">%</div>

<!-- chart 1 -->
<div class="cp" style="left:621px;top:338px;width:364px;height:163px"></div>
<div class="ct" style="left:721px;top:343px">Utilizzo progressivo mensile</div>
<svg width="1092" height="543" style="position:absolute;left:0;top:0">
<defs><linearGradient id="pg" x1="0" y1="0" x2="0" y2="1"><stop offset="0" stop-color="#ffffff"/><stop offset="1" stop-color="#c3ccd6"/></linearGradient></defs>
<rect x="684.5" y="369.5" width="285.0" height="99.0" fill="url(#pg)"/>
<line x1="684.50" y1="369.5" x2="684.50" y2="468.5" stroke="#bcc0c5" stroke-width="1"/>
<line x1="694.50" y1="369.5" x2="694.50" y2="468.5" stroke="#bcc0c5" stroke-width="1"/>
<line x1="704.50" y1="369.5" x2="704.50" y2="468.5" stroke="#bcc0c5" stroke-width="1"/>
<line x1="713.50" y1="369.5" x2="713.50" y2="468.5" stroke="#bcc0c5" stroke-width="1"/>
<line x1="723.50" y1="369.5" x2="723.50" y2="468.5" stroke="#bcc0c5" stroke-width="1"/>
<line x1="733.50" y1="369.5" x2="733.50" y2="468.5" stroke="#bcc0c5" stroke-width="1"/>
<line x1="743.50" y1="369.5" x2="743.50" y2="468.5" stroke="#bcc0c5" stroke-width="1"/>
<line x1="753.50" y1="369.5" x2="753.50" y2="468.5" stroke="#bcc0c5" stroke-width="1"/>
<line x1="763.50" y1="369.5" x2="763.50" y2="468.5" stroke="#bcc0c5" stroke-width="1"/>
<line x1="772.50" y1="369.5" x2="772.50" y2="468.5" stroke="#bcc0c5" stroke-width="1"/>
<line x1="782.50" y1="369.5" x2="782.50" y2="468.5" stroke="#bcc0c5" stroke-width="1"/>
<line x1="792.50" y1="369.5" x2="792.50" y2="468.5" stroke="#bcc0c5" stroke-width="1"/>
<line x1="802.50" y1="369.5" x2="802.50" y2="468.5" stroke="#bcc0c5" stroke-width="1"/>
<line x1="812.50" y1="369.5" x2="812.50" y2="468.5" stroke="#bcc0c5" stroke-width="1"/>
<line x1="822.50" y1="369.5" x2="822.50" y2="468.5" stroke="#bcc0c5" stroke-width="1"/>
<line x1="831.50" y1="369.5" x2="831.50" y2="468.5" stroke="#bcc0c5" stroke-width="1"/>
<line x1="841.50" y1="369.5" x2="841.50" y2="468.5" stroke="#bcc0c5" stroke-width="1"/>
<line x1="851.50" y1="369.5" x2="851.50" y2="468.5" stroke="#bcc0c5" stroke-width="1"/>
<line x1="861.50" y1="369.5" x2="861.50" y2="468.5" stroke="#bcc0c5" stroke-width="1"/>
<line x1="871.50" y1="369.5" x2="871.50" y2="468.5" stroke="#bcc0c5" stroke-width="1"/>
<line x1="881.50" y1="369.5" x2="881.50" y2="468.5" stroke="#bcc0c5" stroke-width="1"/>
<line x1="890.50" y1="369.5" x2="890.50" y2="468.5" stroke="#bcc0c5" stroke-width="1"/>
<line x1="900.50" y1="369.5" x2="900.50" y2="468.5" stroke="#bcc0c5" stroke-width="1"/>
<line x1="910.50" y1="369.5" x2="910.50" y2="468.5" stroke="#bcc0c5" stroke-width="1"/>
<line x1="920.50" y1="369.5" x2="920.50" y2="468.5" stroke="#bcc0c5" stroke-width="1"/>
<line x1="930.50" y1="369.5" x2="930.50" y2="468.5" stroke="#bcc0c5" stroke-width="1"/>
<line x1="940.50" y1="369.5" x2="940.50" y2="468.5" stroke="#bcc0c5" stroke-width="1"/>
<line x1="949.50" y1="369.5" x2="949.50" y2="468.5" stroke="#bcc0c5" stroke-width="1"/>
<line x1="959.50" y1="369.5" x2="959.50" y2="468.5" stroke="#bcc0c5" stroke-width="1"/>
<line x1="969.50" y1="369.5" x2="969.50" y2="468.5" stroke="#bcc0c5" stroke-width="1"/>
<line x1="684.5" y1="468.50" x2="969.5" y2="468.50" stroke="#bcc0c5" stroke-width="1"/>
<line x1="684.5" y1="448.50" x2="969.5" y2="448.50" stroke="#bcc0c5" stroke-width="1"/>
<line x1="684.5" y1="428.50" x2="969.5" y2="428.50" stroke="#bcc0c5" stroke-width="1"/>
<line x1="684.5" y1="409.50" x2="969.5" y2="409.50" stroke="#bcc0c5" stroke-width="1"/>
<line x1="684.5" y1="389.50" x2="969.5" y2="389.50" stroke="#bcc0c5" stroke-width="1"/>
<line x1="684.5" y1="369.50" x2="969.5" y2="369.50" stroke="#bcc0c5" stroke-width="1"/>
<polygon points="684.5,468.5 684.50,465.84 694.33,463.18 704.16,460.52 713.98,457.86 723.81,455.19 733.64,452.53 743.47,449.87 753.29,447.21 763.12,444.55 772.95,441.89 782.78,439.23 792.60,436.57 802.43,433.91 812.26,431.24 822.09,428.58 831.91,425.92 841.74,423.26 851.57,420.60 861.40,417.94 871.22,415.28 881.05,412.62 890.88,409.96 900.71,407.29 910.53,404.63 920.36,401.97 930.19,399.31 940.02,396.65 949.84,393.99 959.67,391.33 969.50,388.67 969.5,468.5" fill="#ffcc00"/>
<polygon points="684.5,468.5 684.50,466.64 694.33,464.77 704.16,462.91 713.98,461.05 723.81,459.18 733.64,457.32 743.47,455.46 753.29,453.59 763.12,451.73 772.95,449.87 782.78,448.01 792.60,446.14 802.43,444.28 812.26,442.42 822.09,440.55 831.91,438.69 841.74,436.83 851.57,434.96 861.40,433.10 871.22,431.24 881.05,429.37 890.88,427.51 900.71,425.65 910.53,423.78 920.36,421.92 930.19,420.06 940.02,418.19 949.84,416.33 959.67,414.47 969.50,412.60 969.5,468.5" fill="#0000ff"/>
<polygon points="684.5,468.5 684.50,466.08 694.33,463.89 704.16,461.58 713.98,459.03 723.81,456.40 733.64,453.75 743.47,451.12 753.29,448.42 763.12,446.56 772.95,446.56 782.78,446.56 792.60,446.56 802.43,446.56 812.26,446.56 822.09,446.56 831.91,446.56 841.74,446.56 851.57,446.56 861.40,446.56 871.22,446.56 881.05,446.56 890.88,446.56 900.71,446.56 910.53,446.56 920.36,446.56 930.19,446.56 940.02,446.56 949.84,446.56 959.67,446.56 969.50,446.56 969.5,468.5" fill="#00a04e"/>
<polyline points="684.50,465.84 694.33,463.18 704.16,460.52 713.98,457.86 723.81,455.19 733.64,452.53 743.47,449.87 753.29,447.21 763.12,444.55 772.95,441.89 782.78,439.23 792.60,436.57 802.43,433.91 812.26,431.24 822.09,428.58 831.91,425.92 841.74,423.26 851.57,420.60 861.40,417.94 871.22,415.28 881.05,412.62 890.88,409.96 900.71,407.29 910.53,404.63 920.36,401.97 930.19,399.31 940.02,396.65 949.84,393.99 959.67,391.33 969.50,388.67" fill="none" stroke="#6b6a50" stroke-width="0.9"/>
<line x1="684.5" y1="369.5" x2="684.5" y2="469.0" stroke="#a8acb0" stroke-width="1"/>
<line x1="680.5" y1="468.50" x2="684.5" y2="468.50" stroke="#444" stroke-width="1"/>
<line x1="680.5" y1="448.50" x2="684.5" y2="448.50" stroke="#444" stroke-width="1"/>
<line x1="680.5" y1="428.50" x2="684.5" y2="428.50" stroke="#444" stroke-width="1"/>
<line x1="680.5" y1="409.50" x2="684.5" y2="409.50" stroke="#444" stroke-width="1"/>
<line x1="680.5" y1="389.50" x2="684.5" y2="389.50" stroke="#444" stroke-width="1"/>
<line x1="680.5" y1="369.50" x2="684.5" y2="369.50" stroke="#444" stroke-width="1"/>
<line x1="684.50" y1="468.5" x2="684.50" y2="471.0" stroke="#444" stroke-width="1"/>
<line x1="694.50" y1="468.5" x2="694.50" y2="471.0" stroke="#444" stroke-width="1"/>
<line x1="704.50" y1="468.5" x2="704.50" y2="471.0" stroke="#444" stroke-width="1"/>
<line x1="713.50" y1="468.5" x2="713.50" y2="471.0" stroke="#444" stroke-width="1"/>
<line x1="723.50" y1="468.5" x2="723.50" y2="471.0" stroke="#444" stroke-width="1"/>
<line x1="733.50" y1="468.5" x2="733.50" y2="471.0" stroke="#444" stroke-width="1"/>
<line x1="743.50" y1="468.5" x2="743.50" y2="471.0" stroke="#444" stroke-width="1"/>
<line x1="753.50" y1="468.5" x2="753.50" y2="471.0" stroke="#444" stroke-width="1"/>
<line x1="763.50" y1="468.5" x2="763.50" y2="471.0" stroke="#444" stroke-width="1"/>
<line x1="772.50" y1="468.5" x2="772.50" y2="471.0" stroke="#444" stroke-width="1"/>
<line x1="782.50" y1="468.5" x2="782.50" y2="471.0" stroke="#444" stroke-width="1"/>
<line x1="792.50" y1="468.5" x2="792.50" y2="471.0" stroke="#444" stroke-width="1"/>
<line x1="802.50" y1="468.5" x2="802.50" y2="471.0" stroke="#444" stroke-width="1"/>
<line x1="812.50" y1="468.5" x2="812.50" y2="471.0" stroke="#444" stroke-width="1"/>
<line x1="822.50" y1="468.5" x2="822.50" y2="471.0" stroke="#444" stroke-width="1"/>
<line x1="831.50" y1="468.5" x2="831.50" y2="471.0" stroke="#444" stroke-width="1"/>
<line x1="841.50" y1="468.5" x2="841.50" y2="471.0" stroke="#444" stroke-width="1"/>
<line x1="851.50" y1="468.5" x2="851.50" y2="471.0" stroke="#444" stroke-width="1"/>
<line x1="861.50" y1="468.5" x2="861.50" y2="471.0" stroke="#444" stroke-width="1"/>
<line x1="871.50" y1="468.5" x2="871.50" y2="471.0" stroke="#444" stroke-width="1"/>
<line x1="881.50" y1="468.5" x2="881.50" y2="471.0" stroke="#444" stroke-width="1"/>
<line x1="890.50" y1="468.5" x2="890.50" y2="471.0" stroke="#444" stroke-width="1"/>
<line x1="900.50" y1="468.5" x2="900.50" y2="471.0" stroke="#444" stroke-width="1"/>
<line x1="910.50" y1="468.5" x2="910.50" y2="471.0" stroke="#444" stroke-width="1"/>
<line x1="920.50" y1="468.5" x2="920.50" y2="471.0" stroke="#444" stroke-width="1"/>
<line x1="930.50" y1="468.5" x2="930.50" y2="471.0" stroke="#444" stroke-width="1"/>
<line x1="940.50" y1="468.5" x2="940.50" y2="471.0" stroke="#444" stroke-width="1"/>
<line x1="949.50" y1="468.5" x2="949.50" y2="471.0" stroke="#444" stroke-width="1"/>
<line x1="959.50" y1="468.5" x2="959.50" y2="471.0" stroke="#444" stroke-width="1"/>
<line x1="969.50" y1="468.5" x2="969.50" y2="471.0" stroke="#444" stroke-width="1"/>
</svg>
<div class="yl" style="top:462.5px">0</div>
<div class="yl" style="top:442.7px">2000</div>
<div class="yl" style="top:422.9px">4000</div>
<div class="yl" style="top:403.1px">6000</div>
<div class="yl" style="top:383.3px">8000</div>
<div class="yl" style="top:363.5px">10000</div>
<div class="xl" style="left:674.5px">1</div>
<div class="xl" style="left:684.3px">2</div>
<div class="xl" style="left:694.2px">3</div>
<div class="xl" style="left:704.0px">4</div>
<div class="xl" style="left:713.8px">5</div>
<div class="xl" style="left:723.6px">6</div>
<div class="xl" style="left:733.5px">7</div>
<div class="xl" style="left:743.3px">8</div>
<div class="xl" style="left:753.1px">9</div>
<div class="xl" style="left:762.9px">10</div>
<div class="xl" style="left:772.8px">11</div>
<div class="xl" style="left:782.6px">12</div>
<div class="xl" style="left:792.4px">13</div>
<div class="xl" style="left:802.3px">14</div>
<div class="xl" style="left:812.1px">15</div>
<div class="xl" style="left:821.9px">16</div>
<div class="xl" style="left:831.7px">17</div>
<div class="xl" style="left:841.6px">18</div>
<div class="xl" style="left:851.4px">19</div>
<div class="xl" style="left:861.2px">20</div>
<div class="xl" style="left:871.1px">21</div>
<div class="xl" style="left:880.9px">22</div>
<div class="xl" style="left:890.7px">23</div>
<div class="xl" style="left:900.5px">24</div>
<div class="xl" style="left:910.4px">25</div>
<div class="xl" style="left:920.2px">26</div>
<div class="xl" style="left:930.0px">27</div>
<div class="xl" style="left:939.8px">28</div>
<div class="xl" style="left:949.7px">29</div>
<div class="xl" style="left:959.5px">30</div>
<div class="a" style="left:629px;top:414px;width:20px;height:10px;line-height:10px;text-align:center;font:bold 6.5px 'Liberation Sans',sans-serif;color:#222;transform:rotate(-90deg);white-space:nowrap">(MWh)</div>
<div class="a" style="left:818.5px;top:486px;font:8px 'Liberation Sans',sans-serif;color:#222;-webkit-text-stroke:0.2px #222">Giorni</div>

<!-- chart 2 -->
<div class="cp" style="left:621px;top:517px;width:364px;height:40px"></div>
<div class="ct" style="left:695px;top:522px;letter-spacing:0.17px">Utilizzo mensile dettaglio giornaliero</div>
</body></html>
